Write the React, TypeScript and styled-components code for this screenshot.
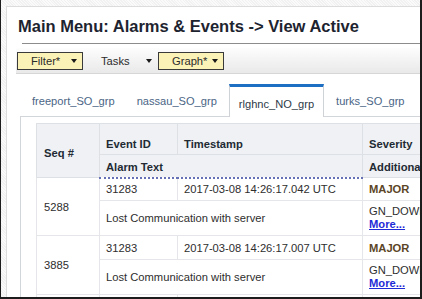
import styled, { createGlobalStyle } from "styled-components";

const GlobalStyle = createGlobalStyle`
  html, body {
    margin: 0;
    padding: 0;
    background: #ffffff;
  }
  body {
    font-family: "Liberation Sans", Arial, sans-serif;
  }
`;

const Frame = styled.div`
  box-sizing: border-box;
  width: 422px;
  height: 299px;
  overflow: hidden;
  border-left: 1px solid #1c1c1c;
  border-right: 2px solid #1c1c1c;
  border-bottom: 2px solid #1c1c1c;
  padding: 6px 0 0 5px;
  background: repeating-linear-gradient(
    45deg,
    #f1f1f1 0px,
    #f1f1f1 1px,
    #fafafa 1px,
    #fafafa 2px
  );
`;

const Page = styled.div`
  box-sizing: border-box;
  width: 430px;
  height: 100%;
  background: #ffffff;
  border: 1px solid #dcdcdc;
  border-right: none;
  border-bottom: none;
  padding: 9px 0 0 9px;
`;

const Title = styled.h1`
  margin: 0 0 0 2px;
  font-size: 16.5px;
  line-height: 20px;
  font-weight: bold;
  color: #1d2430;
`;

const Rule = styled.div`
  margin: 7px 0 0 6px;
  height: 1px;
  background: #8c8c8c;
`;

const Toolbar = styled.div`
  display: flex;
  align-items: center;
  height: 25px;
  margin: 4px 0 0 0;
  padding-left: 1px;
  background: linear-gradient(#fdfdfd, #e9e9e9);
  border-bottom: 1px solid #d6d6d6;
`;

const MenuButton = styled.div<{ $flagged?: boolean; $width: number; $left: number }>`
  box-sizing: border-box;
  display: flex;
  align-items: center;
  justify-content: space-between;
  width: ${(p) => p.$width}px;
  height: 18px;
  padding: 0 5px 0 ${(p) => p.$left}px;
  font-size: 11.2px;
  color: #2b2b2b;
  background: ${(p) => (p.$flagged ? "#fbf2b7" : "transparent")};
  border: 1px solid ${(p) => (p.$flagged ? "#3a3a3a" : "transparent")};
`;

const Caret = styled.span`
  width: 0;
  height: 0;
  border-left: 3.5px solid transparent;
  border-right: 3.5px solid transparent;
  border-top: 4px solid #1a1a1a;
`;

const Tabs = styled.div`
  display: flex;
  align-items: flex-end;
  gap: 2px;
  height: 32px;
  margin: 10px 0 0 3px;
  padding-left: 3px;
  position: relative;
  z-index: 1;
`;

const Tab = styled.div<{ $active?: boolean }>`
  box-sizing: border-box;
  height: ${(p) => (p.$active ? 33 : 30)}px;
  display: flex;
  align-items: center;
  padding: ${(p) => (p.$active ? "3px 9px 0" : "0 9px")};
  font-size: 11.1px;
  color: ${(p) => (p.$active ? "#2d3a48" : "#4a6585")};
  background: #ffffff;
  margin-bottom: ${(p) => (p.$active ? -1 : 0)}px;
  border-top: ${(p) => (p.$active ? "3px solid #1d6fc4" : "none")};
  border-left: 1px solid ${(p) => (p.$active ? "#cfd3d8" : "transparent")};
  border-right: 1px solid ${(p) => (p.$active ? "#cfd3d8" : "transparent")};
`;

const Panel = styled.div`
  margin-left: 4px;
  height: 200px;
  border: 1px solid #d2d5d9;
  border-right: none;
  padding: 6px 0 0 15px;
`;

const Grid = styled.table`
  border-collapse: collapse;
  table-layout: fixed;
  width: 430px;
  font-size: 11.2px;
  color: #2e2e2e;
  border-left: 1px solid #c9ccd0;
  border-top: 1px solid #d6d9dd;
`;

const Head = styled.th<{ $h: number; $dotted?: boolean }>`
  height: ${(p) => p.$h}px;
  padding: 0 6px 4px 6px;
  box-sizing: border-box;
  text-align: left;
  vertical-align: bottom;
  font-weight: bold;
  color: #222a33;
  white-space: nowrap;
  overflow: hidden;
  background: #eff1f4;
  border: 1px solid #dde1e6;
  border-bottom: ${(p) => (p.$dotted ? "2px dotted #6670b4" : "1px solid #dde1e6")};
`;

const SeqHead = styled(Head)`
  vertical-align: middle;
  padding: 4px 7px 0;
`;

const Cell = styled.td<{ $h?: number }>`
  height: ${(p) => p.$h ?? 23}px;
  box-sizing: border-box;
  padding: 0 6px;
  white-space: nowrap;
  overflow: hidden;
  vertical-align: middle;
  border: 1px solid #e4e6e9;
`;

const SeqCell = styled(Cell)`
  padding: 0 7px;
`;

const Severity = styled.span`
  font-weight: bold;
  color: #5b4526;
`;

const Extra = styled.div`
  line-height: 13px;
`;

const MoreLink = styled.a`
  font-weight: bold;
  color: #1f2bd6;
  text-decoration: underline;
`;

type Alarm = {
  seq: string;
  id: string;
  time: string;
  severity: string;
  text: string;
  extra: string;
};

const alarms: Alarm[] = [
  {
    seq: "5288",
    id: "31283",
    time: "2017-03-08 14:26:17.042 UTC",
    severity: "MAJOR",
    text: "Lost Communication with server",
    extra: "GN_DOWN",
  },
  {
    seq: "3885",
    id: "31283",
    time: "2017-03-08 14:26:17.007 UTC",
    severity: "MAJOR",
    text: "Lost Communication with server",
    extra: "GN_DOWN",
  },
];

const tabs = ["freeport_SO_grp", "nassau_SO_grp", "rlghnc_NO_grp", "turks_SO_grp"];

export default function App() {
  return (
    <>
      <GlobalStyle />
      <Frame>
        <Page>
          <Title>Main Menu: Alarms &amp; Events -&gt; View Active</Title>
          <Rule />
          <Toolbar>
            <MenuButton $flagged $width={66} $left={13}>
              Filter* <Caret />
            </MenuButton>
            <MenuButton $width={75} $left={17}>
              Tasks <Caret />
            </MenuButton>
            <MenuButton $flagged $width={66} $left={13}>
              Graph* <Caret />
            </MenuButton>
          </Toolbar>
          <Tabs>
            {tabs.map((t) => (
              <Tab key={t} $active={t === "rlghnc_NO_grp"}>
                {t}
              </Tab>
            ))}
          </Tabs>
          <Panel>
            <Grid>
              <colgroup>
                <col style={{ width: 63 }} />
                <col style={{ width: 78 }} />
                <col style={{ width: 185 }} />
                <col style={{ width: 104 }} />
              </colgroup>
              <thead>
                <tr>
                  <SeqHead $h={31} rowSpan={2}>
                    Seq #
                  </SeqHead>
                  <Head $h={31}>Event ID</Head>
                  <Head $h={31}>Timestamp</Head>
                  <Head $h={31}>Severity</Head>
                </tr>
                <tr>
                  <Head $h={23} colSpan={2} $dotted>
                    Alarm Text
                  </Head>
                  <Head $h={23}>Additional Text</Head>
                </tr>
              </thead>
              <tbody>
                {alarms.map((a, i) => (
                  <>
                    <tr key={a.seq + "a"}>
                      <SeqCell rowSpan={2}>{a.seq}</SeqCell>
                      <Cell $h={i === 0 ? 23 : 24}>{a.id}</Cell>
                      <Cell $h={i === 0 ? 23 : 24}>{a.time}</Cell>
                      <Cell $h={i === 0 ? 23 : 24}>
                        <Severity>{a.severity}</Severity>
                      </Cell>
                    </tr>
                    <tr key={a.seq + "b"}>
                      <Cell $h={35} colSpan={2}>
                        {a.text}
                      </Cell>
                      <Cell $h={35}>
                        <Extra>{a.extra}</Extra>
                        <Extra>
                          <MoreLink href="#">More...</MoreLink>
                        </Extra>
                      </Cell>
                    </tr>
                  </>
                ))}
                <tr>
                  <SeqCell $h={23}>2271</SeqCell>
                  <Cell $h={23}>31283</Cell>
                  <Cell $h={23}>2017-03-08 14:26:16.998 UTC</Cell>
                  <Cell $h={23}>
                    <Severity>MAJOR</Severity>
                  </Cell>
                </tr>
              </tbody>
            </Grid>
          </Panel>
        </Page>
      </Frame>
    </>
  );
}
